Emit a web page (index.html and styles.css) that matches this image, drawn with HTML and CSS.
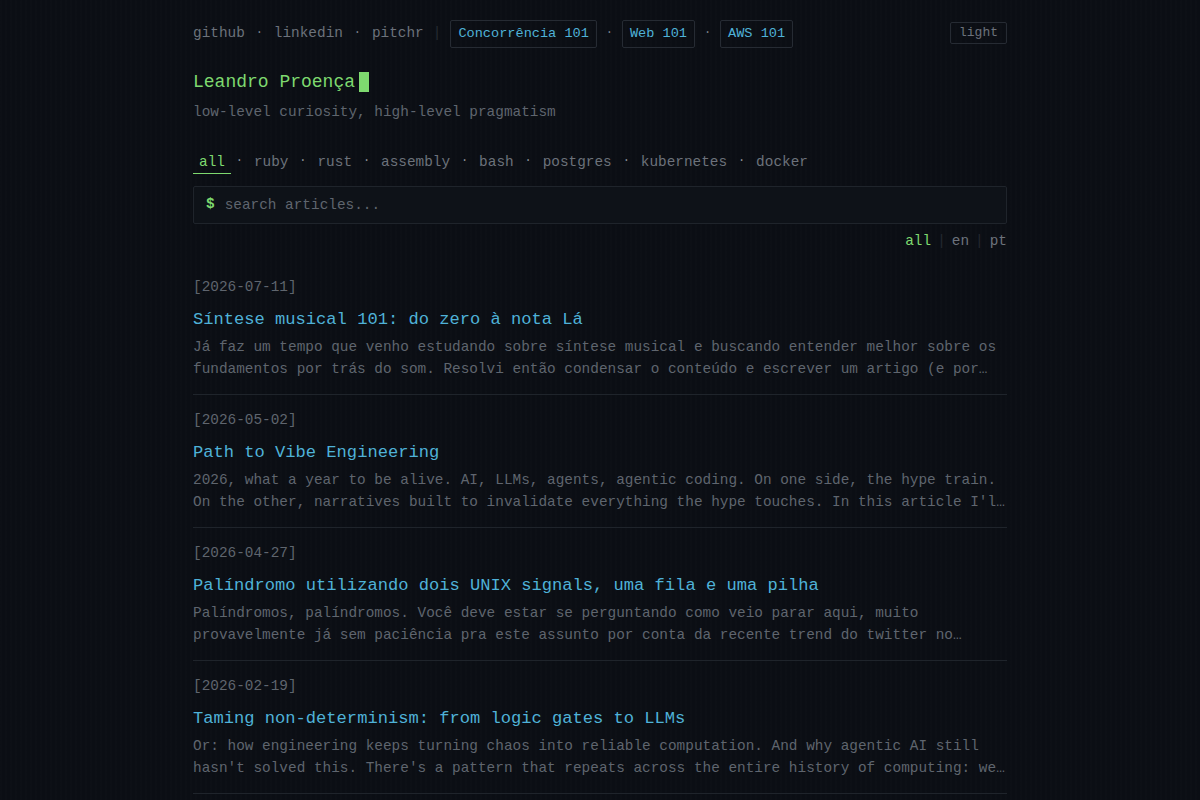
FILE: index.html
```html
<!DOCTYPE html>
<html lang="pt">
<head>
<meta charset="UTF-8">
<title>Leandro Proença</title>
<link rel="stylesheet" href="styles.css">
</head>
<body>

    <div class="page">

        <nav class="topnav">
            <div class="links">
                <a href="#">github</a><span class="dot">·</span>
                <a href="#">linkedin</a><span class="dot">·</span>
                <a href="#">pitchr</a>
                <span class="bar">|</span>
                <a href="#" class="series">Concorrência 101</a><span class="dot">·</span>
                <a href="#" class="series">Web 101</a><span class="dot">·</span>
                <a href="#" class="series">AWS 101</a>
            </div>
            <button class="theme">light</button>
        </nav>

        <header class="hero">
            <h1>Leandro Proença<span class="cursor"></span></h1>
            <p class="tagline">low-level curiosity, high-level pragmatism</p>
        </header>

        <ul class="tags">
            <li><a href="#" class="active">all</a></li><li class="dot">·</li>
            <li><a href="#">ruby</a></li><li class="dot">·</li>
            <li><a href="#">rust</a></li><li class="dot">·</li>
            <li><a href="#">assembly</a></li><li class="dot">·</li>
            <li><a href="#">bash</a></li><li class="dot">·</li>
            <li><a href="#">postgres</a></li><li class="dot">·</li>
            <li><a href="#">kubernetes</a></li><li class="dot">·</li>
            <li><a href="#">docker</a></li>
        </ul>

        <div class="search">
            <span class="prompt">$</span>
            <input type="text" placeholder="search articles...">
        </div>

        <div class="langs">
            <a href="#" class="active">all</a><span class="bar">|</span>
            <a href="#">en</a><span class="bar">|</span>
            <a href="#">pt</a>
        </div>

        <ul class="posts">
            <li class="post">
                <div class="date">[2026-07-11]</div>
                <a href="#" class="title">Síntese musical 101: do zero à nota Lá</a>
                <p class="excerpt">Já faz um tempo que venho estudando sobre síntese musical e buscando entender melhor sobre os fundamentos por trás do som. Resolvi então condensar o conteúdo e escrever um artigo (e por que não uma série) sobre o assunto, começando do zero absoluto.</p>
            </li>
            <li class="post">
                <div class="date">[2026-05-02]</div>
                <a href="#" class="title">Path to Vibe Engineering</a>
                <p class="excerpt">2026, what a year to be alive. AI, LLMs, agents, agentic coding. On one side, the hype train. On the other, narratives built to invalidate everything the hype touches. In this article I'll share my own path through all of it.</p>
            </li>
            <li class="post">
                <div class="date">[2026-04-27]</div>
                <a href="#" class="title">Palíndromo utilizando dois UNIX signals, uma fila e uma pilha</a>
                <p class="excerpt">Palíndromos, palíndromos. Você deve estar se perguntando como veio parar aqui, muito provavelmente já sem paciência pra este assunto por conta da recente trend do twitter no último fim de semana.</p>
            </li>
            <li class="post">
                <div class="date">[2026-02-19]</div>
                <a href="#" class="title">Taming non-determinism: from logic gates to LLMs</a>
                <p class="excerpt">Or: how engineering keeps turning chaos into reliable computation. And why agentic AI still hasn't solved this. There's a pattern that repeats across the entire history of computing: we build abstractions on top of unreliable parts.</p>
            </li>
            <li class="post">
                <div class="date">[2026-01-10]</div>
                <a href="#" class="title">Building a tiny database in Ruby</a>
                <p class="excerpt">Storage engines, pages and B-trees.</p>
            </li>
        </ul>

    </div>

</body>
</html>
```

FILE: styles.css
```css
html, body {
    margin: 0;
    padding: 0;
}

body {
    background-color: #0b0e14;
    background-image: repeating-linear-gradient(90deg, rgba(255,255,255,0.006) 0px, rgba(255,255,255,0.006) 2px, transparent 2px, transparent 5px);
    color: #6c727b;
    font-family: "Liberation Mono", "DejaVu Sans Mono", monospace;
    font-size: 14.4px;
    line-height: 1.6;
}

a {
    color: inherit;
    text-decoration: none;
}

.page {
    width: 814px;
    margin: 0 auto;
    padding-top: 20px;
}

/* top navigation */
.topnav {
    display: flex;
    justify-content: space-between;
    align-items: flex-start;
    height: 28px;
}
.topnav .links {
    display: flex;
    align-items: center;
    height: 28px;
}
.topnav .links a {
    color: #6c727b;
}
.topnav .dot {
    width: 29px;
    text-align: center;
    color: #7a8089;
    font-size: 12px;
}
.topnav .bar {
    color: #262b33;
    margin: 0 9px;
}
.topnav .series {
    color: #4fb2d8 !important;
    font-size: 13.6px;
    border: 1px solid #262b33;
    border-radius: 2px;
    padding: 0 7px;
    height: 26px;
    line-height: 26px;
}
.topnav .links .series + .dot {
    width: 25px;
}
.theme {
    margin-top: 2px;
    font-family: inherit;
    font-size: 13px;
    color: #6c727b;
    background: transparent;
    border: 1px solid #262b33;
    border-radius: 2px;
    padding: 0 8px;
    height: 22px;
    line-height: 20px;
}

/* header */
.hero {
    margin-top: 21px;
}
.hero h1 {
    margin: 0;
    font-size: 18px;
    font-weight: normal;
    color: #7ed96f;
    line-height: 26px;
    display: flex;
    align-items: center;
}
.cursor {
    display: inline-block;
    width: 10px;
    height: 20px;
    margin-left: 4px;
    background: #7ed96f;
}
.tagline {
    margin: 7px 0 0;
    line-height: 20px;
    color: #5f656e;
}

/* tag filter */
.tags {
    list-style: none;
    margin: 30px 0 0;
    padding: 0;
    display: flex;
    align-items: center;
}
.tags a {
    display: block;
    padding: 0 6px;
    line-height: 21px;
    border-bottom: 1px solid transparent;
}
.tags a.active {
    color: #7ed96f;
    border-bottom-color: #7ed96f;
}
.tags .dot {
    width: 9px;
    margin: 0 4px 2px;
    text-align: center;
    color: #8a9098;
    font-size: 12px;
}

/* search */
.search {
    margin-top: 12px;
    display: flex;
    align-items: center;
    height: 36px;
    border: 1px solid #1f242b;
    border-radius: 2px;
    background: #0e1218;
    padding: 0 12px;
}
.prompt {
    color: #7ed96f;
    font-weight: bold;
    margin-right: 10px;
}
.search input {
    flex: 1;
    background: transparent;
    border: none;
    outline: none;
    color: #8a9098;
    font-family: inherit;
    font-size: 14.4px;
    padding: 0;
}
.search input::placeholder {
    color: #5f656e;
}

/* language filter */
.langs {
    margin-top: 6px;
    display: flex;
    justify-content: flex-end;
    line-height: 22px;
}
.langs a.active {
    color: #7ed96f;
}
.langs .bar {
    color: #232830;
    margin: 0 6px;
}

/* article list */
.posts {
    list-style: none;
    margin: 10px 0 0;
    padding: 0;
}
.post {
    padding: 14px 0 14px;
    border-bottom: 1px solid #1f242b;
}
.date {
    color: #5f656e;
    line-height: 23px;
}
.title {
    display: block;
    margin-top: 9px;
    font-size: 17.1px;
    line-height: 24px;
    color: #4fb2d8;
}
.excerpt {
    margin: 4px 0 0;
    line-height: 22px;
    color: #5f656e;
    display: -webkit-box;
    -webkit-line-clamp: 2;
    -webkit-box-orient: vertical;
    overflow: hidden;
}
```
